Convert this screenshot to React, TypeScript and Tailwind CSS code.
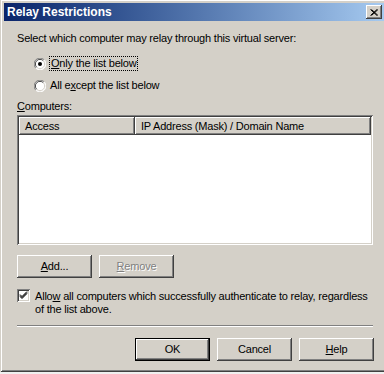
import type { ReactNode } from "react";

const raised =
  "bg-[#d4d0c8] shadow-[inset_-1px_-1px_#404040,inset_1px_1px_#ffffff,inset_-2px_-2px_#808080,inset_2px_2px_#d4d0c8]";

function Radio({ checked }: { checked?: boolean }) {
  return (
    <svg width="12" height="12" viewBox="0 0 12 12" className="shrink-0">
      <circle cx="6" cy="6" r="5.5" fill="#ffffff" />
      <path d="M10.2 1.8 A5.5 5.5 0 0 0 1.8 10.2" fill="none" stroke="#808080" strokeWidth="1" />
      <path d="M9.3 2.7 A4.4 4.4 0 0 0 2.7 9.3" fill="none" stroke="#404040" strokeWidth="1" />
      <path d="M1.8 10.2 A5.5 5.5 0 0 0 10.2 1.8" fill="none" stroke="#ffffff" strokeWidth="1" />
      <path d="M2.7 9.3 A4.4 4.4 0 0 0 9.3 2.7" fill="none" stroke="#d4d0c8" strokeWidth="1" />
      {checked && <circle cx="6" cy="6" r="2" fill="#000000" />}
    </svg>
  );
}

function Checkbox() {
  return (
    <div className="h-[13px] w-[13px] shrink-0 bg-white shadow-[inset_1px_1px_#808080,inset_-1px_-1px_#ffffff,inset_2px_2px_#404040,inset_-2px_-2px_#d4d0c8]">
      <svg width="13" height="13" viewBox="0 0 13 13">
        <path d="M3 5.5 L5 7.5 L10 2.5 M3 6.5 L5 8.5 L10 3.5 M3 7.5 L5 9.5 L10 4.5" fill="none" stroke="#000" strokeWidth="1" />
      </svg>
    </div>
  );
}

function Button({ children, def }: { children: ReactNode; def?: boolean }) {
  if (def) {
    return (
      <div className="h-[23px] w-[75px] border border-black">
        <div className={`flex h-full items-center justify-center ${raised}`}>{children}</div>
      </div>
    );
  }
  return <div className={`flex h-[23px] w-[75px] items-center justify-center ${raised}`}>{children}</div>;
}

export default function App() {
  return (
    <div className="h-[374px] w-[384px] overflow-hidden bg-[#f0f0f0] font-['Liberation_Sans',Arial,sans-serif] text-[11px] leading-[13px] text-black">
      <div className="-mt-px h-[373px] w-[388px] bg-[#d4d0c8] p-[4px] shadow-[inset_1px_1px_#d4d0c8,inset_-1px_-1px_#404040,inset_2px_2px_#ffffff,inset_-2px_-2px_#808080]">
        {/* title bar */}
        <div className="flex h-[18px] items-center justify-between bg-gradient-to-r from-[#0a246a] to-[#a6caf0] pl-[3px] pr-[2px]">
          <span className="text-[12px] font-bold text-white">Relay Restrictions</span>
          <div className={`flex h-[14px] w-[16px] items-center justify-center ${raised}`}>
            <svg width="8" height="7" viewBox="0 0 8 7">
              <path d="M0.5 0.5 L7 6.5 M1.5 0.5 L8 6.5 M7 0.5 L0.5 6.5 M8 0.5 L1.5 6.5" stroke="#000" strokeWidth="1" />
            </svg>
          </div>
        </div>

        <div className="flex flex-col pl-[13px] tracking-[-0.2px]">
          <p className="mt-[11px]">Select which computer may relay through this virtual server:</p>

          <div className="ml-[17px] mt-[11px] flex items-center gap-[3px]">
            <Radio checked />
            <span className="border border-dotted border-black px-px">
              <u>O</u>nly the list below
            </span>
          </div>
          <div className="ml-[17px] mt-[8px] flex items-center gap-[4px]">
            <Radio />
            <span>
              All e<u>x</u>cept the list below
            </span>
          </div>

          <p className="mt-[8px]">
            <u>C</u>omputers:
          </p>

          <div className="mt-[2px] h-[130px] w-[356px] bg-white p-[2px] shadow-[inset_1px_1px_#808080,inset_-1px_-1px_#ffffff,inset_2px_2px_#404040,inset_-2px_-2px_#d4d0c8]">
            <div className="flex h-[18px]">
              <div className={`flex w-[116px] items-center pl-[6px] ${raised}`}>Access</div>
              <div className={`flex flex-1 items-center pl-[6px] ${raised}`}>IP Address (Mask) / Domain Name</div>
            </div>
          </div>

          <div className="mt-[10px] flex gap-[7px]">
            <Button>
              <span>
                <u>A</u>dd...
              </span>
            </Button>
            <Button>
              <span className="text-[#808080] [text-shadow:1px_1px_#ffffff]">
                <u>R</u>emove
              </span>
            </Button>
          </div>

          <div className="mt-[11px] flex gap-[5px]">
            <Checkbox />
            <p className="mt-px">
              Allo<u>w</u> all computers which successfully authenticate to relay, regardless
              <br />
              of the list above.
            </p>
          </div>

          <div className="mt-[9px] h-[2px] w-[356px] border-b border-t border-b-white border-t-[#808080]" />

          <div className="mt-[11px] flex w-[357px] justify-end gap-[7px]">
            <Button def>OK</Button>
            <Button>Cancel</Button>
            <Button>
              <span>
                <u>H</u>elp
              </span>
            </Button>
          </div>
        </div>
      </div>
    </div>
  );
}
